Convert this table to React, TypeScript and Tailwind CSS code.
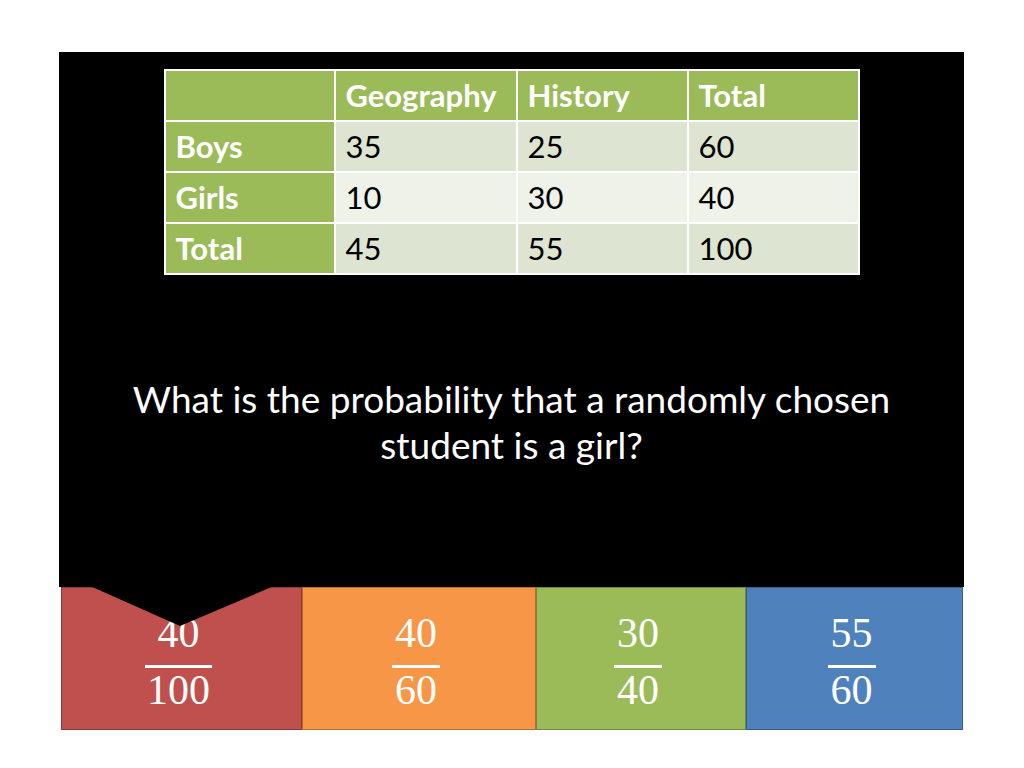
const rows = [
  { label: 'Boys', cells: ['35', '25', '60'], bg: 'bg-[#dde5d2]' },
  { label: 'Girls', cells: ['10', '30', '40'], bg: 'bg-[#eef2e8]' },
  { label: 'Total', cells: ['45', '55', '100'], bg: 'bg-[#dde5d2]' },
];

const answers = [
  { top: '40', bottom: '100', box: 'w-[241px] bg-[#c0504d] border-[#8c3a38]' },
  { top: '40', bottom: '60', box: 'w-[234px] bg-[#f79646] border-[#b66d2f]' },
  { top: '30', bottom: '40', box: 'w-[210px] bg-[#9bbb59] border-[#71893f]' },
  { top: '55', bottom: '60', box: 'w-[217px] bg-[#4f81bd] border-[#385d8a]' },
];

function Fraction({ top, bottom }: { top: string; bottom: string }) {
  return (
    <div className="mt-[6px] mr-[6px] flex flex-col items-center text-white font-['Liberation_Serif',serif] text-[42px] leading-[44px]">
      <span>{top}</span>
      <span className="block h-[3px] bg-white w-[calc(100%+4px)] min-w-[44px] mt-[10px]" />
      <span>{bottom}</span>
    </div>
  );
}

export default function App() {
  return (
    <div className="w-[1024px] h-[768px] bg-white pt-[52px] pl-[59px] font-['Lato',sans-serif]">
      <div className="relative w-[905px]">
        <div className="bg-black h-[535px] flex flex-col items-center pt-[17px]">
          <table className="border-collapse text-[31px] leading-none">
            <thead>
              <tr className="bg-[#9bbb59] text-white font-bold h-[51px]">
                <th className="w-[170px] border-2 border-white" />
                <th className="w-[182px] border-2 border-white text-left px-[10px]">Geography</th>
                <th className="w-[171px] border-2 border-white text-left px-[10px]">History</th>
                <th className="w-[171px] border-2 border-white text-left px-[10px]">Total</th>
              </tr>
            </thead>
            <tbody>
              {rows.map((r) => (
                <tr key={r.label} className="h-[51px]">
                  <td className="bg-[#9bbb59] text-white font-bold border-2 border-white px-[10px]">{r.label}</td>
                  {r.cells.map((c, i) => (
                    <td key={i} className={`${r.bg} text-black border-2 border-white px-[10px]`}>{c}</td>
                  ))}
                </tr>
              ))}
            </tbody>
          </table>
          <p className="mt-[101px] text-white text-[37px] leading-[46px] text-center w-[820px]">
            What is the probability that a randomly chosen student is a girl?
          </p>
        </div>

        {/* callout pointer over the first answer */}
        <svg className="absolute left-[31px] top-[534px] z-10" width="184" height="42" viewBox="0 0 184 42">
          <polygon points="0,0 184,0 90,40" fill="#000" />
        </svg>

        <div className="flex h-[143px] ml-[2px]">
          {answers.map((a, i) => (
            <div key={i} className={`${a.box} border-[1.5px] flex items-center justify-center`}>
              <Fraction top={a.top} bottom={a.bottom} />
            </div>
          ))}
        </div>
      </div>
    </div>
  );
}
